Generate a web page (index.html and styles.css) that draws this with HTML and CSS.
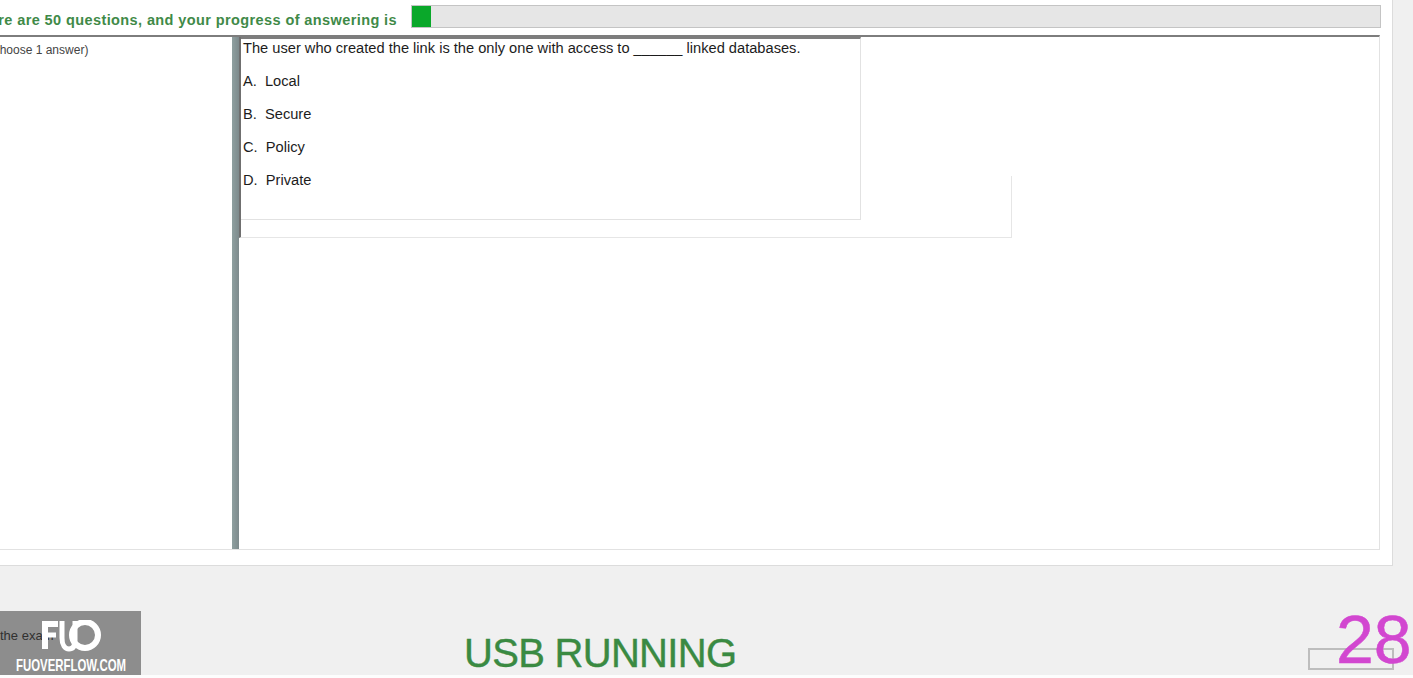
FILE: index.html
```html
<!DOCTYPE html>
<html lang="en">
<head>
  <meta charset="UTF-8" />
  <title>Exam</title>
  <link rel="stylesheet" href="styles.css">
</head>
<body>

  <div class="panel">
    <!-- PROGRESS -->
    <div class="progress-row">
      <div class="progress-label"><span>There are 50 questions, and your progress of answering is</span></div>
      <div class="progress-bar"><div class="progress-fill"></div></div>
    </div>

    <div class="split">
      <div class="left-pane"><span class="choose">(Choose 1 answer)</span></div>
      <div class="splitter"></div>
      <div class="right-pane">
        <div class="outer-frame">
          <div class="question">
            <p>The user who created the link is the only one with access to ______ linked databases.</p>
            <p>A.&nbsp; Local</p>
            <p>B.&nbsp; Secure</p>
            <p>C.&nbsp; Policy</p>
            <p>D.&nbsp; Private</p>
          </div>
          <div class="frame-edge"></div>
        </div>
      </div>
    </div>
  </div>

  <div class="footer">
    <div class="exam-text">the exam</div>
    <div class="usb">USB RUNNING</div>
    <div class="finish-btn"></div>
    <div class="timer">28</div>

    <!-- watermark -->
    <div class="watermark">
      <svg class="logo" width="62" height="32" viewBox="0 0 62 32">
        <g fill="none" stroke="#fff">
          <path stroke-width="6" d="M3 29V4H16"/>
          <path stroke-width="5" d="M3 15H14"/>
          <path stroke-width="5" d="M20 1V18C20 25 23 29 27 29C31 29 33 26 33 20V1"/>
          <circle stroke-width="6" cx="43" cy="15" r="13"/>
        </g>
      </svg>
      <div class="watermark-name">FUOVERFLOW.COM</div>
    </div>
  </div>

</body>
</html>
```

FILE: styles.css
```css
html {
  overflow: hidden;
}

body {
  margin: 0;
  width: 1413px;
  height: 678px;
  background-color: #f0f0f0;
  font-family: "Liberation Sans", Arial, sans-serif;
  color: #222;
  box-sizing: border-box;
  border-bottom: 3px solid #fdfdfd;
}

.panel {
  width: 1393px;
  height: 566px;
  background: #fff;
  border-right: 1px solid #dcdcdc;
  border-bottom: 1px solid #dcdcdc;
  box-sizing: border-box;
  display: flex;
  flex-direction: column;
}

.progress-row {
  height: 35px;
  display: flex;
  align-items: flex-start;
  flex-shrink: 0;
}

.progress-label {
  width: 397px;
  margin-top: 12px;
  overflow: hidden;
  display: flex;
  justify-content: flex-end;
  white-space: nowrap;
  font-size: 14.5px;
  font-weight: bold;
  letter-spacing: 0.4px;
  color: #3f8a48;
}

.progress-bar {
  width: 970px;
  height: 23px;
  margin: 5px 0 0 14px;
  background: #e6e6e6;
  border: 1px solid #c4c4c4;
  box-sizing: border-box;
}

.progress-fill {
  width: 19px;
  height: 100%;
  background: #0aa82a;
}

.split {
  width: 1380px;
  height: 515px;
  display: flex;
  border-top: 2px solid #7d7d7d;
  border-right: 1px solid #e2e2e2;
  border-bottom: 1px solid #e2e2e2;
  box-sizing: border-box;
}

.left-pane {
  width: 232px;
  flex-shrink: 0;
  overflow: hidden;
  font-size: 12px;
  padding-top: 6px;
  color: #444;
  white-space: nowrap;
}

.choose {
  display: block;
  margin-left: -13px;
}

.splitter {
  width: 7px;
  flex-shrink: 0;
  background: linear-gradient(to right, #8fa0a0, #7d8a8c);
}

.right-pane {
  flex: 1;
}

.outer-frame {
  width: 773px;
  height: 201px;
  display: flex;
  border-bottom: 1px solid #e6e6e6;
  border-left: 2px solid #6f6f6f;
  box-sizing: border-box;
}

.question {
  width: 620px;
  height: 183px;
  flex-shrink: 0;
  padding: 1px 0 0 2px;
  box-sizing: border-box;
  border-top: 2px solid #7d7d7d;
  border-right: 1px solid #e2e2e2;
  border-bottom: 1px solid #e2e2e2;
  font-size: 14.65px;
  color: #1c1c1c;
}

.question p {
  margin: 0 0 16px;
  line-height: 17px;
  white-space: nowrap;
}

.frame-edge {
  flex: 1;
  margin-top: 139px;
  border-right: 1px solid #e6e6e6;
}

.footer {
  position: relative;
  height: 109px;
  display: flex;
  align-items: flex-start;
}

.exam-text {
  width: 464px;
  flex-shrink: 0;
  margin-top: 62px;
  font-size: 13px;
  color: #222;
}

.usb {
  width: 844px;
  flex-shrink: 0;
  margin-top: 64px;
  font-size: 40px;
  line-height: 46px;
  letter-spacing: -0.7px;
  -webkit-text-stroke: 0.4px #3a8a42;
  color: #3a8a42;
}

.finish-btn {
  width: 86px;
  height: 22px;
  margin-top: 82px;
  border: 2px solid #bdbdbd;
  box-sizing: border-box;
}

.timer {
  position: absolute;
  top: 34px;
  left: 1336px;
  font-size: 68px;
  line-height: 78px;
  -webkit-text-stroke: 0.5px #d247d0;
  color: #d247d0;
}

.watermark {
  position: absolute;
  left: 0;
  top: 45px;
  width: 141px;
  height: 67px;
  background: rgba(60, 60, 60, 0.55);
  display: flex;
  flex-direction: column;
  align-items: flex-start;
  color: #fff;
}

.logo {
  margin: 9px 0 0 42px;
}

.watermark-name {
  width: 110px;
  margin: 4px 0 0 16px;
  font-size: 17px;
  font-weight: bold;
  line-height: 19px;
  white-space: nowrap;
  transform: scaleX(0.67);
  transform-origin: left center;
}
```
